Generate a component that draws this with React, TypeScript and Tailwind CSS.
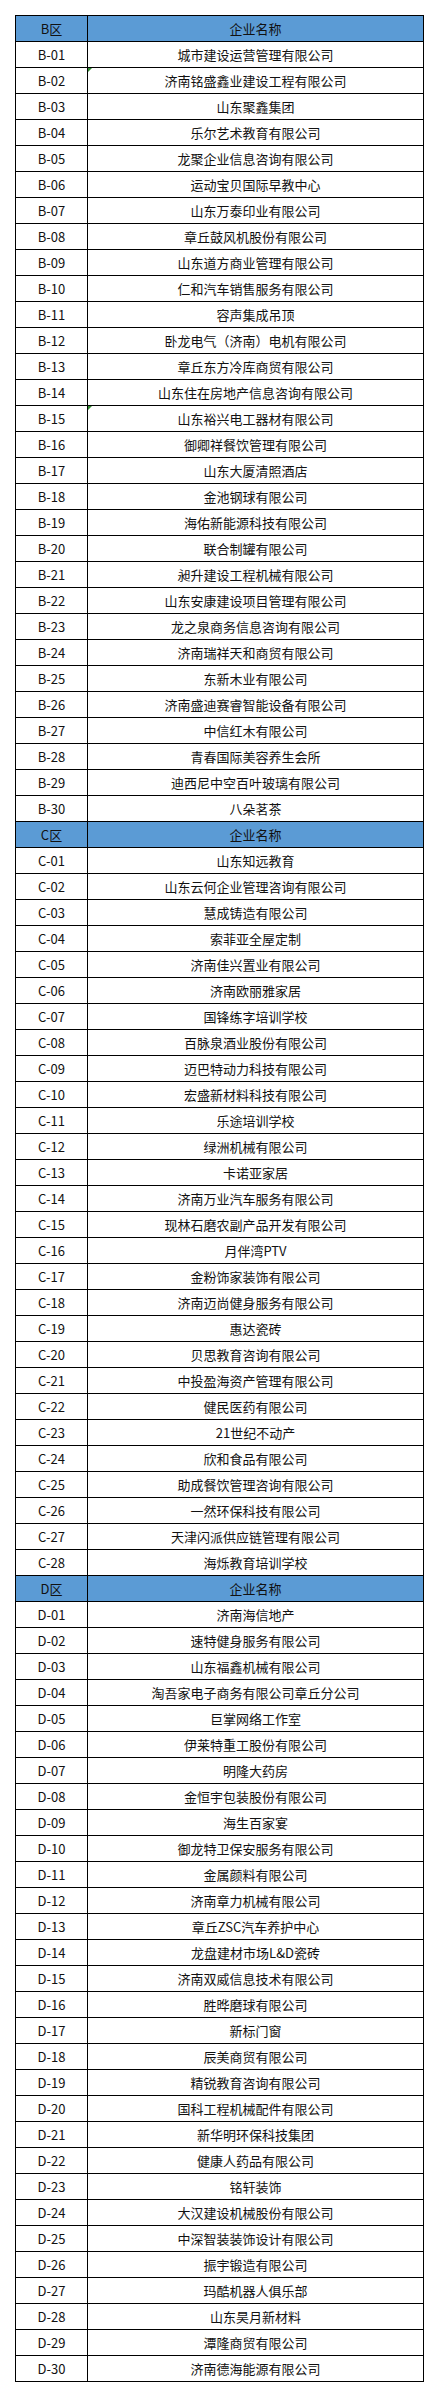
import React from "react";

type Section = {
  zone: string;
  prefix: string;
  names: string[];
};

const sections: Section[] = [
  {
    zone: "B区",
    prefix: "B",
    names: [
      "城市建设运营管理有限公司",
      "济南铭盛鑫业建设工程有限公司",
      "山东聚鑫集团",
      "乐尔艺术教育有限公司",
      "龙聚企业信息咨询有限公司",
      "运动宝贝国际早教中心",
      "山东万泰印业有限公司",
      "章丘鼓风机股份有限公司",
      "山东道方商业管理有限公司",
      "仁和汽车销售服务有限公司",
      "容声集成吊顶",
      "卧龙电气（济南）电机有限公司",
      "章丘东方冷库商贸有限公司",
      "山东住在房地产信息咨询有限公司",
      "山东裕兴电工器材有限公司",
      "御卿祥餐饮管理有限公司",
      "山东大厦清照酒店",
      "金池钢球有限公司",
      "海佑新能源科技有限公司",
      "联合制罐有限公司",
      "昶升建设工程机械有限公司",
      "山东安康建设项目管理有限公司",
      "龙之泉商务信息咨询有限公司",
      "济南瑞祥天和商贸有限公司",
      "东新木业有限公司",
      "济南盛迪赛睿智能设备有限公司",
      "中信红木有限公司",
      "青春国际美容养生会所",
      "迪西尼中空百叶玻璃有限公司",
      "八朵茗茶",
    ],
  },
  {
    zone: "C区",
    prefix: "C",
    names: [
      "山东知远教育",
      "山东云何企业管理咨询有限公司",
      "慧成铸造有限公司",
      "索菲亚全屋定制",
      "济南佳兴置业有限公司",
      "济南欧丽雅家居",
      "国锋练字培训学校",
      "百脉泉酒业股份有限公司",
      "迈巴特动力科技有限公司",
      "宏盛新材料科技有限公司",
      "乐途培训学校",
      "绿洲机械有限公司",
      "卡诺亚家居",
      "济南万业汽车服务有限公司",
      "现林石磨农副产品开发有限公司",
      "月伴湾PTV",
      "金粉饰家装饰有限公司",
      "济南迈尚健身服务有限公司",
      "惠达瓷砖",
      "贝思教育咨询有限公司",
      "中投盈海资产管理有限公司",
      "健民医药有限公司",
      "21世纪不动产",
      "欣和食品有限公司",
      "助成餐饮管理咨询有限公司",
      "一然环保科技有限公司",
      "天津闪派供应链管理有限公司",
      "海烁教育培训学校",
    ],
  },
  {
    zone: "D区",
    prefix: "D",
    names: [
      "济南海信地产",
      "速特健身服务有限公司",
      "山东福鑫机械有限公司",
      "淘吾家电子商务有限公司章丘分公司",
      "巨掌网络工作室",
      "伊莱特重工股份有限公司",
      "明隆大药房",
      "金恒宇包装股份有限公司",
      "海生百家宴",
      "御龙特卫保安服务有限公司",
      "金属颜料有限公司",
      "济南章力机械有限公司",
      "章丘ZSC汽车养护中心",
      "龙盘建材市场L&D瓷砖",
      "济南双威信息技术有限公司",
      "胜晔磨球有限公司",
      "新标门窗",
      "辰美商贸有限公司",
      "精锐教育咨询有限公司",
      "国科工程机械配件有限公司",
      "新华明环保科技集团",
      "健康人药品有限公司",
      "铭轩装饰",
      "大汉建设机械股份有限公司",
      "中深智装装饰设计有限公司",
      "振宇锻造有限公司",
      "玛酷机器人俱乐部",
      "山东昊月新材料",
      "潭隆商贸有限公司",
      "济南德海能源有限公司",
    ],
  },
];

// cells that carry Excel's little green "number stored as text" flag
const flagged = new Set(["B-02", "B-15"]);

const Row = ({ code, name, header }: { code: string; name: string; header?: boolean }) => (
  <tr className={`h-[26px] ${header ? "bg-[#5b9bd5]" : "bg-white"}`}>
    <td className="border border-black p-0 text-center align-middle">{code}</td>
    <td className="relative border border-black p-0 text-center align-middle">
      {flagged.has(code) && (
        <span className="absolute left-0 top-0 h-0 w-0 border-t-[4px] border-r-[4px] border-t-[#2e8b2e] border-r-transparent" />
      )}
      {name}
    </td>
  </tr>
);

export default function App() {
  return (
    <div className="min-h-[2397px] w-[439px] bg-white p-[15px]">
      <table
        className="w-[409px] table-fixed border-collapse text-[13px] leading-none text-[#111]"
        style={{ fontFamily: '"Noto Sans CJK SC", "Noto Sans", sans-serif' }}
      >
        <colgroup>
          <col className="w-[72px]" />
          <col />
        </colgroup>
        <tbody>
          {sections.map((s) => (
            <React.Fragment key={s.zone}>
              <Row code={s.zone} name="企业名称" header />
              {s.names.map((n, i) => {
                const code = `${s.prefix}-${String(i + 1).padStart(2, "0")}`;
                return <Row key={code} code={code} name={n} />;
              })}
            </React.Fragment>
          ))}
        </tbody>
      </table>
    </div>
  );
}
